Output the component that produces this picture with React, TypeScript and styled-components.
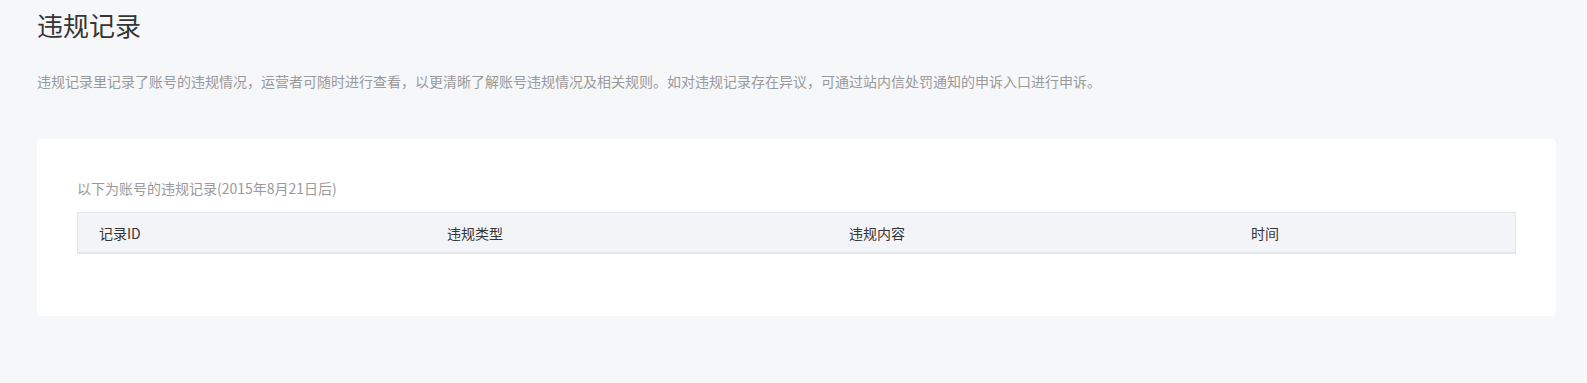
import * as React from 'react'
import styled, { createGlobalStyle } from 'styled-components'

const GlobalStyle = createGlobalStyle`
  body {
    margin: 0;
    background: #f6f7f9;
    font-family: "Noto Sans CJK SC", "Liberation Sans", sans-serif;
  }
`

const Page = styled.div`
  padding: 6px 31px 40px 37px;
  min-height: 383px;
  box-sizing: border-box;
`

const Title = styled.h1`
  margin: 0;
  font-size: 26px;
  font-weight: 400;
  line-height: 38px;
  color: #353535;
`

const Description = styled.p`
  margin: 27px 0 0;
  font-size: 14px;
  line-height: 20px;
  color: #9a9a9a;
`

const Card = styled.section`
  margin-top: 48px;
  background: #fff;
  border-radius: 4px;
  padding: 39px 40px 62px;
`

const Caption = styled.div`
  font-size: 14px;
  line-height: 20px;
  color: #9a9a9a;
  margin-bottom: 14px;
`

const HeaderRow = styled.div`
  display: grid;
  grid-template-columns: 348px 402px 402px 1fr;
  height: 42px;
  align-items: center;
  background: #f3f4f7;
  border: 1px solid #e4e6eb;
  border-bottom-width: 2px;
  box-sizing: border-box;
`

const HeaderCell = styled.div`
  padding-left: 21px;
  font-size: 14px;
  color: #353535;
`

const columns = ['记录ID', '违规类型', '违规内容', '时间']

export default function App() {
  return (
    <Page>
      <GlobalStyle />
      <Title>违规记录</Title>
      <Description>
        违规记录里记录了账号的违规情况，运营者可随时进行查看，以更清晰了解账号违规情况及相关规则。如对违规记录存在异议，可通过站内信处罚通知的申诉入口进行申诉。
      </Description>
      <Card>
        <Caption>以下为账号的违规记录(2015年8月21日后)</Caption>
        <HeaderRow>
          {columns.map(c => <HeaderCell key={c}>{c}</HeaderCell>)}
        </HeaderRow>
      </Card>
    </Page>
  )
}
